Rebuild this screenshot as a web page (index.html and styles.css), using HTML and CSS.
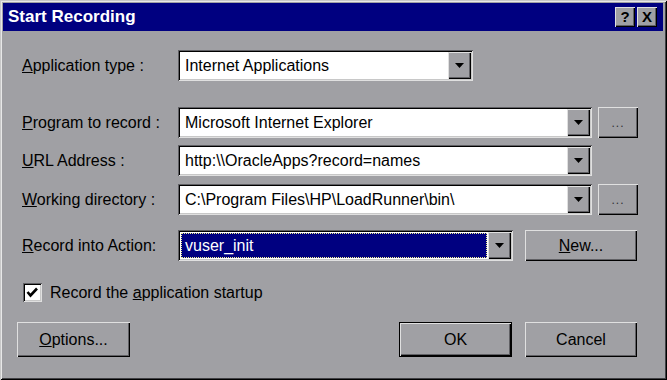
FILE: index.html
```html
<!DOCTYPE html>
<html lang="en">
<head>
  <meta charset="UTF-8">
  <meta name="viewport" content="width=device-width, initial-scale=1.0">
  <title>Start Recording</title>
  <link rel="stylesheet" href="styles.css">
</head>
<body>
  <div class="window">
    <div class="titlebar">
      <span class="title">Start Recording</span>
      <div class="title-buttons">
        <button class="title-btn">?</button>
        <button class="title-btn">X</button>
      </div>
    </div>

    <div class="content">
      <div class="field-row row-app">
        <label class="label"><u>A</u>pplication type :</label>
        <div class="combo combo-short">
          <span class="combo-value">Internet Applications</span>
          <span class="combo-arrow"><svg width="9" height="5" viewBox="0 0 9 5"><polygon points="0,0 9,0 4.5,5" fill="#000"/></svg></span>
        </div>
      </div>

      <div class="field-row row-program">
        <label class="label"><u>P</u>rogram to record :</label>
        <div class="combo combo-wide">
          <span class="combo-value">Microsoft Internet Explorer</span>
          <span class="combo-arrow"><svg width="9" height="5" viewBox="0 0 9 5"><polygon points="0,0 9,0 4.5,5" fill="#000"/></svg></span>
        </div>
        <button class="btn btn-browse">...</button>
      </div>

      <div class="field-row row-url">
        <label class="label"><u>U</u>RL Address :</label>
        <div class="combo combo-wide">
          <span class="combo-value">http:\\OracleApps?record=names</span>
          <span class="combo-arrow"><svg width="9" height="5" viewBox="0 0 9 5"><polygon points="0,0 9,0 4.5,5" fill="#000"/></svg></span>
        </div>
      </div>

      <div class="field-row row-dir">
        <label class="label"><u>W</u>orking directory :</label>
        <div class="combo combo-wide">
          <span class="combo-value">C:\Program Files\HP\LoadRunner\bin\</span>
          <span class="combo-arrow"><svg width="9" height="5" viewBox="0 0 9 5"><polygon points="0,0 9,0 4.5,5" fill="#000"/></svg></span>
        </div>
        <button class="btn btn-browse">...</button>
      </div>

      <div class="field-row row-action">
        <label class="label"><u>R</u>ecord into Action:</label>
        <div class="combo combo-mid">
          <span class="combo-value selected">vuser_init</span>
          <span class="combo-arrow"><svg width="9" height="5" viewBox="0 0 9 5"><polygon points="0,0 9,0 4.5,5" fill="#000"/></svg></span>
        </div>
        <button class="btn btn-new"><u>N</u>ew...</button>
      </div>

      <div class="check-row">
        <span class="checkbox">
          <svg width="13" height="13" viewBox="0 0 13 13"><polyline points="1.5,6 4.5,9.5 11,2.5" fill="none" stroke="#000" stroke-width="2.6"/></svg>
        </span>
        <span>Record the <u>a</u>pplication startup</span>
      </div>

      <div class="button-row">
        <button class="btn btn-dialog"><u>O</u>ptions...</button>
        <button class="btn btn-dialog btn-default">OK</button>
        <button class="btn btn-dialog btn-cancel">Cancel</button>
      </div>
    </div>
  </div>
</body>
</html>
```

FILE: styles.css
```css
body {
  margin: 0;
  padding: 0;
  font-family: "Liberation Sans", Arial, sans-serif;
  font-size: 16px;
  color: #000;
  background-color: #a0a0a4;
}
.window {
  width: 667px;
  height: 380px;
  box-sizing: border-box;
  padding: 3px 4px 4px 3px;
  background-color: #a0a0a4;
  box-shadow: inset 1px 1px 0 #c8c8c8, inset -1px -1px 0 #000, inset 2px 2px 0 #e8e8e8, inset -2px -2px 0 #404044;
  display: flex;
  flex-direction: column;
}
.titlebar {
  height: 28px;
  background-color: #000080;
  color: #fff;
  display: flex;
  align-items: center;
  justify-content: space-between;
  padding: 0 6px 0 5px;
}
.title {
  font-size: 17px;
  font-weight: bold;
}
.title-buttons {
  display: flex;
  gap: 2px;
}
.title-btn {
  width: 20px;
  height: 20px;
  padding: 0;
  border: none;
  background-color: #a0a0a4;
  box-shadow: inset 1px 1px 0 #e0e0e0, inset -1px -1px 0 #000, inset -2px -2px 0 #606064;
  font-family: "Liberation Sans", Arial, sans-serif;
  font-size: 15px;
  font-weight: bold;
  line-height: 20px;
  color: #000;
}
.content {
  flex: 1;
  padding: 19px 0 0 14px;
}
.field-row {
  display: flex;
  align-items: center;
  padding-left: 5px;
}
.row-program {
  margin-top: 26px;
}
.row-url {
  margin-top: 7px;
}
.row-dir {
  margin-top: 8px;
}
.row-action {
  margin-top: 15px;
}
.label {
  width: 156px;
  flex-shrink: 0;
}
.combo {
  height: 31px;
  box-sizing: border-box;
  padding: 2px;
  background-color: #fff;
  box-shadow: inset 1px 1px 0 #606064, inset -1px -1px 0 #e0e0e0, inset 2px 2px 0 #000, inset -2px -2px 0 #c8c8c8;
  display: flex;
  align-items: stretch;
}
.combo-short {
  width: 295px;
}
.combo-wide {
  width: 414px;
}
.combo-mid {
  width: 335px;
}
.combo-value {
  flex: 1;
  display: flex;
  align-items: center;
  padding-left: 5px;
  white-space: nowrap;
  overflow: hidden;
}
.combo-value.selected {
  margin: 1px 1px 1px 1px;
  padding-left: 4px;
  background-color: #000080;
  color: #fff;
  outline: 1px dotted #f0f090;
  outline-offset: -1px;
}
.combo-arrow {
  width: 23px;
  display: flex;
  align-items: center;
  justify-content: center;
  background-color: #a0a0a4;
  box-shadow: inset 1px 1px 0 #e0e0e0, inset -1px -1px 0 #000, inset -2px -2px 0 #606064;
}
.btn {
  padding: 0;
  border: none;
  background-color: #a0a0a4;
  box-shadow: inset 1px 1px 0 #e0e0e0, inset -1px -1px 0 #000, inset -2px -2px 0 #606064;
  font-family: "Liberation Sans", Arial, sans-serif;
  font-size: 16px;
  color: #000;
}
.btn-browse {
  width: 40px;
  height: 31px;
  margin-left: 6px;
  font-size: 12px;
  color: #303034;
  letter-spacing: 1px;
}
.btn-new {
  width: 112px;
  height: 31px;
  margin-left: 12px;
}
.check-row {
  display: flex;
  align-items: center;
  gap: 8px;
  margin-top: 22px;
  padding-left: 6px;
  height: 19px;
}
.checkbox {
  width: 19px;
  height: 19px;
  box-sizing: border-box;
  background-color: #fff;
  box-shadow: inset 1px 1px 0 #606064, inset -1px -1px 0 #e0e0e0, inset 2px 2px 0 #000, inset -2px -2px 0 #c8c8c8;
  display: flex;
  align-items: center;
  justify-content: center;
}
.button-row {
  display: flex;
  margin-top: 20px;
  padding-right: 26px;
}
.btn-dialog {
  width: 113px;
  height: 35px;
}
.btn-default {
  margin-left: auto;
  border: 1px solid #000;
  box-sizing: border-box;
}
.btn-cancel {
  width: 112px;
  margin-left: 13px;
}
```
